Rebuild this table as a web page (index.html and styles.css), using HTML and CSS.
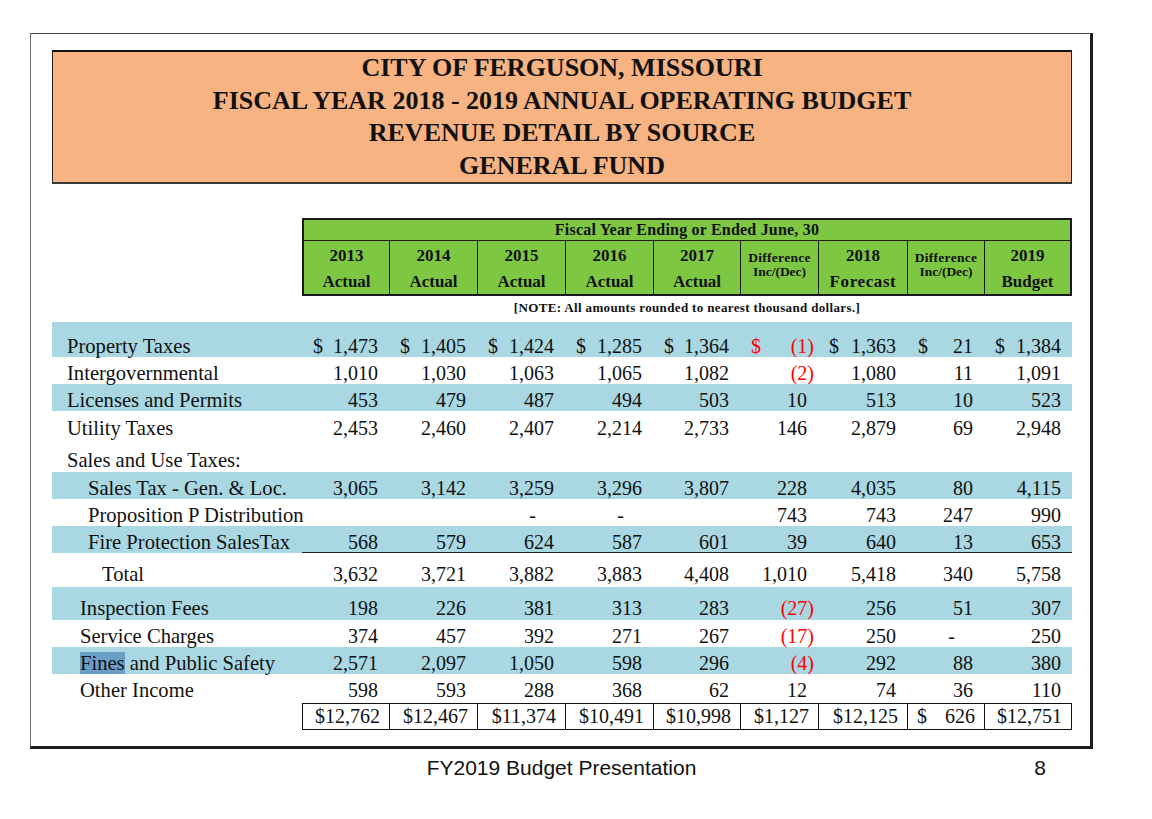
FILE: index.html
```html
<!DOCTYPE html>
<html>
<head>
<meta charset="utf-8">
<link rel="stylesheet" href="styles.css">
</head>
<body>
<div class="page">
  <div class="frame">
    <div class="title">
      <div>CITY OF FERGUSON, MISSOURI</div>
      <div>FISCAL YEAR 2018 - 2019 ANNUAL OPERATING BUDGET</div>
      <div>REVENUE DETAIL BY SOURCE</div>
      <div>GENERAL FUND</div>
    </div>

    <div class="head">
      <div class="head-top">Fiscal Year Ending or Ended June, 30</div>
      <div class="head-cols">
        <div class="hcell"><span class="yr">2013</span><span class="sub">Actual</span></div>
        <div class="hcell"><span class="yr">2014</span><span class="sub">Actual</span></div>
        <div class="hcell"><span class="yr">2015</span><span class="sub">Actual</span></div>
        <div class="hcell"><span class="yr">2016</span><span class="sub">Actual</span></div>
        <div class="hcell"><span class="yr">2017</span><span class="sub">Actual</span></div>
        <div class="hcell diff"><span>Difference</span><span class="dec">Inc/(Dec)</span></div>
        <div class="hcell"><span class="yr">2018</span><span class="sub spaced">Forecast</span></div>
        <div class="hcell diff"><span>Difference</span><span class="dec">Inc/(Dec)</span></div>
        <div class="hcell"><span class="yr">2019</span><span class="sub">Budget</span></div>
      </div>
    </div>
    <div class="note">[NOTE: All amounts rounded to nearest thousand dollars.]</div>

    <div class="rows">
      <div class="row band first">
        <div class="label">Property Taxes</div>
        <div class="cell"><span class="cur">$</span><span>1,473</span></div>
        <div class="cell"><span class="cur">$</span><span>1,405</span></div>
        <div class="cell"><span class="cur">$</span><span>1,424</span></div>
        <div class="cell"><span class="cur">$</span><span>1,285</span></div>
        <div class="cell"><span class="cur">$</span><span>1,364</span></div>
        <div class="cell red"><span class="cur">$</span><span>(1<span class="cp">)</span></span></div>
        <div class="cell"><span class="cur">$</span><span>1,363</span></div>
        <div class="cell"><span class="cur">$</span><span>21</span></div>
        <div class="cell"><span class="cur">$</span><span>1,384</span></div>
      </div>
      <div class="row">
        <div class="label">Intergovernmental</div>
        <div class="cell">1,010</div>
        <div class="cell">1,030</div>
        <div class="cell">1,063</div>
        <div class="cell">1,065</div>
        <div class="cell">1,082</div>
        <div class="cell red"><span>(2<span class="cp">)</span></span></div>
        <div class="cell">1,080</div>
        <div class="cell">11</div>
        <div class="cell">1,091</div>
      </div>
      <div class="row band">
        <div class="label">Licenses and Permits</div>
        <div class="cell">453</div>
        <div class="cell">479</div>
        <div class="cell">487</div>
        <div class="cell">494</div>
        <div class="cell">503</div>
        <div class="cell">10</div>
        <div class="cell">513</div>
        <div class="cell">10</div>
        <div class="cell">523</div>
      </div>
      <div class="row roomy">
        <div class="label">Utility Taxes</div>
        <div class="cell">2,453</div>
        <div class="cell">2,460</div>
        <div class="cell">2,407</div>
        <div class="cell">2,214</div>
        <div class="cell">2,733</div>
        <div class="cell">146</div>
        <div class="cell">2,879</div>
        <div class="cell">69</div>
        <div class="cell">2,948</div>
      </div>
      <div class="row section">
        <div class="label">Sales and Use Taxes:</div>
      </div>
      <div class="row band">
        <div class="label indent">Sales Tax - Gen. &amp; Loc.</div>
        <div class="cell">3,065</div>
        <div class="cell">3,142</div>
        <div class="cell">3,259</div>
        <div class="cell">3,296</div>
        <div class="cell">3,807</div>
        <div class="cell">228</div>
        <div class="cell">4,035</div>
        <div class="cell">80</div>
        <div class="cell">4,115</div>
      </div>
      <div class="row">
        <div class="label indent">Proposition P Distribution</div>
        <div class="cell"></div>
        <div class="cell"></div>
        <div class="cell"><span class="dash">-</span></div>
        <div class="cell"><span class="dash">-</span></div>
        <div class="cell"></div>
        <div class="cell">743</div>
        <div class="cell">743</div>
        <div class="cell">247</div>
        <div class="cell">990</div>
      </div>
      <div class="row band underline">
        <div class="label indent">Fire Protection SalesTax</div>
        <div class="cell">568</div>
        <div class="cell">579</div>
        <div class="cell">624</div>
        <div class="cell">587</div>
        <div class="cell">601</div>
        <div class="cell">39</div>
        <div class="cell">640</div>
        <div class="cell">13</div>
        <div class="cell">653</div>
      </div>
      <div class="row subtotal">
        <div class="label indent-total">Total</div>
        <div class="cell">3,632</div>
        <div class="cell">3,721</div>
        <div class="cell">3,882</div>
        <div class="cell">3,883</div>
        <div class="cell">4,408</div>
        <div class="cell">1,010</div>
        <div class="cell">5,418</div>
        <div class="cell">340</div>
        <div class="cell">5,758</div>
      </div>
      <div class="row band after-total">
        <div class="label indent-other">Inspection Fees</div>
        <div class="cell">198</div>
        <div class="cell">226</div>
        <div class="cell">381</div>
        <div class="cell">313</div>
        <div class="cell">283</div>
        <div class="cell red"><span>(27<span class="cp">)</span></span></div>
        <div class="cell">256</div>
        <div class="cell">51</div>
        <div class="cell">307</div>
      </div>
      <div class="row">
        <div class="label indent-other">Service Charges</div>
        <div class="cell">374</div>
        <div class="cell">457</div>
        <div class="cell">392</div>
        <div class="cell">271</div>
        <div class="cell">267</div>
        <div class="cell red"><span>(17<span class="cp">)</span></span></div>
        <div class="cell">250</div>
        <div class="cell"><span class="dash">-</span></div>
        <div class="cell">250</div>
      </div>
      <div class="row band">
        <div class="label indent-other"><span class="sel">Fines</span> and Public Safety</div>
        <div class="cell">2,571</div>
        <div class="cell">2,097</div>
        <div class="cell">1,050</div>
        <div class="cell">598</div>
        <div class="cell">296</div>
        <div class="cell red"><span>(4<span class="cp">)</span></span></div>
        <div class="cell">292</div>
        <div class="cell">88</div>
        <div class="cell">380</div>
      </div>
      <div class="row">
        <div class="label indent-other">Other Income</div>
        <div class="cell">598</div>
        <div class="cell">593</div>
        <div class="cell">288</div>
        <div class="cell">368</div>
        <div class="cell">62</div>
        <div class="cell">12</div>
        <div class="cell">74</div>
        <div class="cell">36</div>
        <div class="cell">110</div>
      </div>
      <div class="grand">
        <div class="gl"></div>
        <div class="gcell">$12,762</div>
        <div class="gcell">$12,467</div>
        <div class="gcell">$11,374</div>
        <div class="gcell">$10,491</div>
        <div class="gcell">$10,998</div>
        <div class="gcell">$1,127</div>
        <div class="gcell">$12,125</div>
        <div class="gcell"><span class="cur">$</span><span>626</span></div>
        <div class="gcell">$12,751</div>
      </div>
    </div>
  </div>
  <div class="footer">
    <div></div>
    <div class="ft-title">FY2019 Budget Presentation</div>
    <div class="ft-num">8</div>
  </div>
</div>
</body>
</html>
```

FILE: styles.css
```css
* { box-sizing: border-box; margin: 0; padding: 0; }
body { margin: 0; background: #fff; font-family: "Liberation Serif", "Times New Roman", serif; color: #111; }

.page { width: 1152px; padding: 33px 0 0 30px; }

.frame {
  width: 1063px;
  border-left: 1px solid #6a6a6a;
  border-top: 1px solid #4a4a4a;
  border-right: 3px solid #1e1e1e;
  border-bottom: 3px solid #1e1e1e;
  padding: 16px 18px 16px 21px;
}

.title {
  background: #f7b382;
  border: 1px solid #222;
  border-top: 2px solid #111;
  border-bottom: 2px solid #3a3a3a;
  text-align: center;
  font-weight: bold;
  font-size: 26px;
  line-height: 32.5px;
  margin-bottom: 34px;
}

.head {
  margin-left: 250px;
  width: 770px;
  background: #7ec743;
  border: 2px solid #1a1a1a;
}
.head-top {
  height: 21px;
  border-bottom: 1px solid #1a1a1a;
  text-align: center;
  font-weight: bold;
  font-size: 16px;
  letter-spacing: 0.2px;
  line-height: 20px;
}
.head-cols {
  display: grid;
  grid-template-columns: 85px 88px 88px 88px 87px 78px 89px 77px 86px;
  height: 53px;
}
.hcell {
  display: flex;
  flex-direction: column;
  align-items: center;
  padding-top: 2px;
  font-weight: bold;
  font-size: 17px;
  line-height: 26px;
}
.hcell + .hcell { border-left: 1px solid #1a1a1a; }
.hcell.diff { font-size: 13.5px; line-height: 14px; padding-top: 10px; letter-spacing: 0.3px; }
.hcell .dec { letter-spacing: 0; }
.spaced { letter-spacing: 0.6px; }

.note {
  margin-left: 250px;
  width: 770px;
  height: 26px;
  text-align: center;
  font-weight: bold;
  font-size: 13px;
  letter-spacing: 0.35px;
  line-height: 24px;
}

.row {
  display: grid;
  grid-template-columns: 250px 87px 88px 88px 88px 87px 78px 89px 77px 88px;
  font-size: 20px;
  line-height: 20px;
  padding: 6px 0 1px;
}
.row.first { padding: 14px 0 1px; }
.row.roomy { padding: 7px 0 2px; }
.row.section { padding: 10px 0 2px; }
.row.subtotal { padding: 11px 0 3px; }
.row.after-total { padding: 11px 0 2px; }
.band { background: #a9d7e2; }

.label { padding-left: 15px; white-space: nowrap; font-size: 20.6px; }
.label.indent { padding-left: 36px; }
.label.indent-total { padding-left: 50px; }
.label.indent-other { padding-left: 28px; }
.sel { background: #6b9ec7; }

.cell {
  display: flex;
  justify-content: flex-end;
  padding: 0 11px 0 11px;
  white-space: nowrap;
}
.underline .cell { border-bottom: 1px solid #222; margin-bottom: -1px; }
.cur { margin-right: auto; }
.red { color: #f00; }
.cp { margin-right: -7px; }
.dash { margin-right: 18px; }

.grand {
  display: grid;
  grid-template-columns: 250px 87px 88px 88px 88px 87px 78px 89px 77px 88px;
  font-size: 20px;
  line-height: 25px;
  margin-top: 2px;
}
.gcell {
  display: flex;
  justify-content: flex-end;
  padding: 0 9px 0 9px;
  border-top: 1px solid #111;
  border-bottom: 1px solid #111;
  border-left: 1px solid #111;
  white-space: nowrap;
}
.gcell:last-child { border-right: 1px solid #111; }

.footer {
  width: 1063px;
  display: grid;
  grid-template-columns: 1fr auto 1fr;
  margin-top: 7px;
  font-family: "Liberation Sans", Arial, sans-serif;
  font-size: 21px;
  line-height: 24px;
  color: #111;
}
.ft-num { text-align: right; padding-right: 47px; }
```
